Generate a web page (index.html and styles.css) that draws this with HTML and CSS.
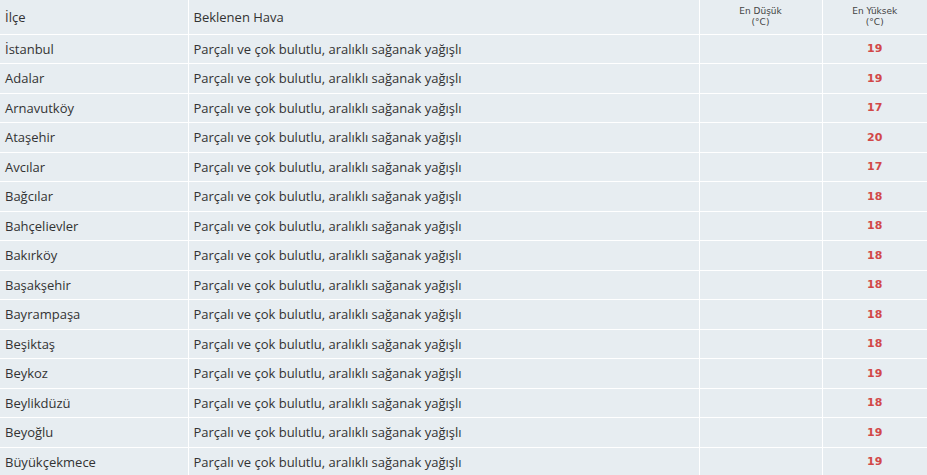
FILE: index.html
```html
<!DOCTYPE html>
<html lang="tr">
<head>
<meta charset="utf-8">
<link rel="stylesheet" href="styles.css">
</head>
<body>
<table class="wx">
  <colgroup>
    <col class="c-ilce"><col class="c-hava"><col class="c-min"><col class="c-max">
  </colgroup>
  <thead>
    <tr>
      <th class="h-left">İlçe</th>
      <th class="h-left">Beklenen Hava</th>
      <th class="h-small">En Düşük<br>(°C)</th>
      <th class="h-small">En Yüksek<br>(°C)</th>
    </tr>
  </thead>
  <tbody>
    <tr><td>İstanbul</td><td>Parçalı ve çok bulutlu, aralıklı sağanak yağışlı</td><td></td><td class="t">19</td></tr>
    <tr><td>Adalar</td><td>Parçalı ve çok bulutlu, aralıklı sağanak yağışlı</td><td></td><td class="t">19</td></tr>
    <tr><td>Arnavutköy</td><td>Parçalı ve çok bulutlu, aralıklı sağanak yağışlı</td><td></td><td class="t">17</td></tr>
    <tr><td>Ataşehir</td><td>Parçalı ve çok bulutlu, aralıklı sağanak yağışlı</td><td></td><td class="t">20</td></tr>
    <tr><td>Avcılar</td><td>Parçalı ve çok bulutlu, aralıklı sağanak yağışlı</td><td></td><td class="t">17</td></tr>
    <tr><td>Bağcılar</td><td>Parçalı ve çok bulutlu, aralıklı sağanak yağışlı</td><td></td><td class="t">18</td></tr>
    <tr><td>Bahçelievler</td><td>Parçalı ve çok bulutlu, aralıklı sağanak yağışlı</td><td></td><td class="t">18</td></tr>
    <tr><td>Bakırköy</td><td>Parçalı ve çok bulutlu, aralıklı sağanak yağışlı</td><td></td><td class="t">18</td></tr>
    <tr><td>Başakşehir</td><td>Parçalı ve çok bulutlu, aralıklı sağanak yağışlı</td><td></td><td class="t">18</td></tr>
    <tr><td>Bayrampaşa</td><td>Parçalı ve çok bulutlu, aralıklı sağanak yağışlı</td><td></td><td class="t">18</td></tr>
    <tr><td>Beşiktaş</td><td>Parçalı ve çok bulutlu, aralıklı sağanak yağışlı</td><td></td><td class="t">18</td></tr>
    <tr><td>Beykoz</td><td>Parçalı ve çok bulutlu, aralıklı sağanak yağışlı</td><td></td><td class="t">19</td></tr>
    <tr><td>Beylikdüzü</td><td>Parçalı ve çok bulutlu, aralıklı sağanak yağışlı</td><td></td><td class="t">18</td></tr>
    <tr><td>Beyoğlu</td><td>Parçalı ve çok bulutlu, aralıklı sağanak yağışlı</td><td></td><td class="t">19</td></tr>
    <tr><td>Büyükçekmece</td><td>Parçalı ve çok bulutlu, aralıklı sağanak yağışlı</td><td></td><td class="t">19</td></tr>
  </tbody>
</table>
</body>
</html>
```

FILE: styles.css
```css
html, body {
  margin: 0;
  padding: 0;
  background: #e7edf1;
}
.wx {
  width: 927px;
  border-collapse: collapse;
  table-layout: fixed;
  font-family: "Open Sans", "Liberation Sans", sans-serif;
  font-size: 13px;
  color: #333;
  background: #e7edf1;
}
.c-ilce { width: 188px; }
.c-hava { width: 511px; }
.c-min { width: 123px; }
.c-max { width: 105px; }
.wx th, .wx td {
  box-sizing: border-box;
  border: 1px solid #fff;
  border-top: none;
  padding: 0 5px;
  vertical-align: middle;
}
.wx tr > :first-child { border-left: none; }
.wx tr > :last-child { border-right: none; }
.wx thead th {
  height: 34px;
  font-weight: normal;
}
.h-left {
  text-align: left;
  font-size: 13px;
}
.h-small {
  text-align: center;
  font-family: "DejaVu Sans", Verdana, sans-serif;
  font-size: 9px;
  line-height: 11px;
  color: #444;
  vertical-align: top !important;
  padding-top: 6px !important;
}
.wx tbody td {
  height: 29.5px;
  font-size: 13px;
}
.wx td.t {
  text-align: center;
  font-family: "DejaVu Sans", Verdana, sans-serif;
  font-weight: bold;
  font-size: 11px;
  color: #d24848;
}
```
